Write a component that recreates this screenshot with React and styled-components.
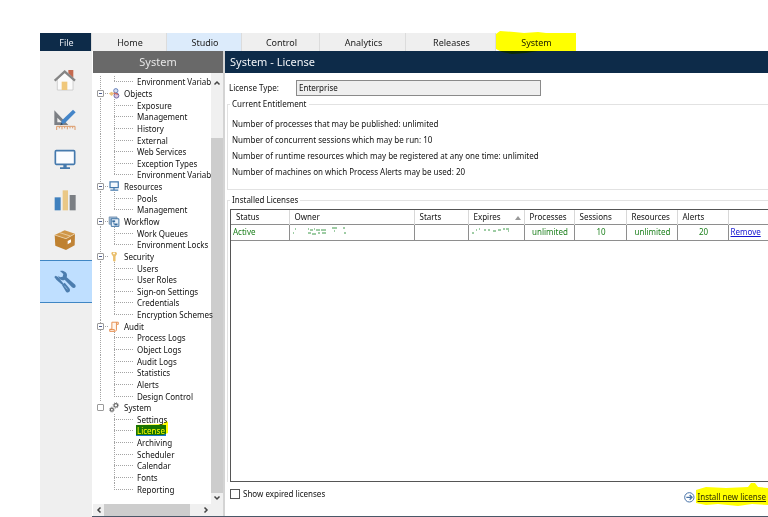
import React, { useState } from 'react'
import styled, { createGlobalStyle } from 'styled-components'

const GlobalStyle = createGlobalStyle`
    * {
        box-sizing: border-box;
    }

    body {
        margin: 0;
        background: #fff;
        color: #111;
        font-family: "Noto Sans", "Open Sans", sans-serif;
        font-size: 8px;
        line-height: 12px;
    }

    button, input {
        font: inherit;
        color: inherit;
    }
`

/* ---------- shell ---------- */

const Page = styled.div`
    display: flex;
    flex-direction: column;
    min-height: 100vh;
    padding: 33px 0 0 40px;
    overflow: hidden;
`

const Body = styled.div`
    display: flex;
    flex: 1;
    min-width: 0;
`

const Workspace = styled.div`
    display: flex;
    flex: 1;
    min-width: 0;
    border-bottom: 1px solid #4a5868;
`

/* ---------- tabs ---------- */

const Tabs = styled.nav`
    display: flex;
    height: 18px;
`

const Tab = styled.button`
    position: relative;
    width: ${(props) => props.$width}px;
    padding: 0 0 0 2px;
    border: 0;
    border-right: 1px solid ${(props) => props.$plain ? 'transparent' : '#dcdcdc'};
    background: ${(props) => props.$bg || '#efefef'};
    color: ${(props) => props.$color || '#222'};
    font-size: 9px;
    line-height: 17px;
`

const Marker = styled.svg`
    position: absolute;
    z-index: 1;
    mix-blend-mode: multiply;
    pointer-events: none;
    left: ${(props) => props.$left}px;
    top: ${(props) => props.$top}px;
`

/* ---------- icon rail ---------- */

const Rail = styled.nav`
    display: flex;
    flex-direction: column;
    width: 52px;
    padding-top: 9px;
    background: #efefef;
`

const RailButton = styled.button`
    display: flex;
    align-items: center;
    justify-content: center;
    height: ${(props) => props.$active ? 43 : 40}px;
    padding: 0 3px 0 0;
    border: 0 solid #3f86c4;
    border-width: ${(props) => props.$active ? '1px 0' : '0'};
    background: ${(props) => props.$active ? '#bfdfff' : 'transparent'};
`

/* ---------- side panel ---------- */

const Side = styled.aside`
    display: flex;
    flex-direction: column;
    width: 133px;
    padding-left: 1px;
    border-right: 2px solid #d4d4d4;
`

const SideTitle = styled.h2`
    margin: 0;
    height: 22px;
    background: #696969;
    color: #e6e6e6;
    font-size: 11px;
    font-weight: 400;
    line-height: 21px;
    text-align: center;
`

const SideScroll = styled.div`
    display: flex;
    flex: 1;
`

const Tree = styled.ul`
    display: grid;
    grid-template-columns: minmax(0, 1fr);
    grid-auto-rows: 1fr;
    flex: 1;
    min-width: 0;
    margin: 0;
    padding: 3px 0 9px;
    list-style: none;
`

const TreeRow = styled.li`
    display: flex;
    align-items: center;
    min-height: 0;
`

const dots = (dir) => `repeating-linear-gradient(${dir}, #a4a4a4 0 1px, transparent 1px 2px)`

const Trunk = styled.span`
    display: flex;
    align-items: center;
    align-self: stretch;
    width: 15px;
    padding-left: 4px;
    background-image: ${(props) => props.$line ? dots('to bottom') : 'none'}${(props) => props.$root ? `, ${dots('to right')}` : ''};
    background-position: 7px 0, 8px 50%;
    background-size: 1px 100%, 8px 1px;
    background-repeat: no-repeat;
`

const Branch = styled.span`
    align-self: stretch;
    width: 28px;
    background-image: ${dots('to bottom')}, ${dots('to right')};
    background-position: 6px 0, 6px 50%;
    background-size: 1px ${(props) => props.$last ? '50%' : '100%'}, 20px 1px;
    background-repeat: no-repeat;
`

const Expander = styled.button`
    display: flex;
    align-items: center;
    justify-content: center;
    width: 7px;
    height: 7px;
    padding: 0;
    border: 1px solid #9a9a9a;
    border-radius: 1px;
    background: #fff;

    &::before {
        content: '';
        width: 3px;
        height: 1px;
        background: ${(props) => props.$bare ? 'transparent' : '#4a5c92'};
    }
`

const TreeIcon = styled.svg`
    flex: none;
    width: 12px;
    height: 11px;
    margin-right: 3px;
`

const TreeLink = styled.a`
    position: relative;
    padding: 0 1px;
    background: ${(props) => props.$selected ? '#1874c8' : 'transparent'};
    color: ${(props) => props.$selected ? '#fff' : '#111'};
    text-decoration: none;
    white-space: nowrap;
`

const TreeText = styled.div`
    flex: 1;
    min-width: 0;
    line-height: 11px;
`

const VBar = styled.div`
    display: flex;
    flex-direction: column;
    align-items: center;
    width: 12px;
    padding: 6px 0 2px;
    background: #f0f0f0;
`

const VThumb = styled.div`
    flex: 1;
    align-self: stretch;
    margin: 51px 0 1px;
    background: #cdcdcd;
`

const HBar = styled.div`
    display: flex;
    align-items: center;
    height: 12px;
    padding-right: 12px;
    background: #f0f0f0;
`

const HThumb = styled.div`
    align-self: stretch;
    width: 86px;
    margin-right: 10px;
    background: #cdcdcd;
`

const Arrow = styled.button`
    display: flex;
    align-items: center;
    justify-content: center;
    width: 11px;
    height: 8px;
    padding: 0;
    border: 0;
    background: transparent;
`

/* ---------- main panel ---------- */

const Main = styled.main`
    display: flex;
    flex: 1;
    flex-direction: column;
    min-width: 0;
`

const MainTitle = styled.h1`
    margin: 0;
    height: 22px;
    padding-left: 5px;
    background: #0d2b49;
    color: #f0f3f6;
    font-size: 11px;
    font-weight: 400;
    line-height: 21px;
`

const TypeRow = styled.div`
    display: flex;
    align-items: center;
    padding: 7px 0 2px 4px;
`

const TypeLabel = styled.label`
    width: 67px;
`

const TypeInput = styled.input`
    width: 245px;
    height: 16px;
    padding: 0 2px 2px;
    border: 1px solid #8a8a8a;
    border-radius: 0;
    background: #efefef;
`

const Group = styled.fieldset`
    display: flex;
    flex: ${(props) => props.$grow ? 1 : 'none'};
    flex-direction: column;
    min-width: 0;
    margin: 0 0 ${(props) => props.$grow ? 0 : 4}px 2px;
    padding: 0 0 ${(props) => props.$grow ? 0 : 9}px 2px;
    border: 1px solid #e2e2e2;
    border-right: 0;
    border-bottom-width: ${(props) => props.$grow ? 0 : 1}px;
`

const Legend = styled.legend`
    margin: 0;
    padding: 0 2px;
`

const Fact = styled.p`
    margin: 0;
    padding-left: 2px;
    line-height: 16px;

    &:first-of-type {
        margin-top: 6px;
    }
`

const TableBox = styled.div`
    flex: 1;
    margin-top: 3px;
    border: 1px solid #555;
    border-width: 1px 0 1px 1px;
    overflow: hidden;
`

const Table = styled.table`
    width: 100%;
    border-collapse: collapse;
    table-layout: fixed;
`

const Th = styled.th`
    height: 14px;
    padding: 0 0 0 5px;
    border: 1px solid #d8d8d8;
    border-width: 0 1px 0 0;
    font-weight: 400;
    text-align: left;
    white-space: nowrap;
`

const Td = styled.td`
    height: 16px;
    padding: 0 0 0 2px;
    border: 1px solid #8e8e8e;
    border-left: 0;
    color: #1d801d;
    text-align: ${(props) => props.$center ? 'center' : 'left'};
    white-space: nowrap;
`

const SortMark = styled.svg`
    float: right;
    margin: 5px 3px 0 0;
`

const Link = styled.a`
    position: relative;
    color: ${(props) => props.$dark ? '#303040' : '#1414d0'};
    text-decoration: underline;
`

const Footer = styled.footer`
    display: flex;
    justify-content: space-between;
    height: 34px;
    padding: 5px 2px 0 5px;
`

const Check = styled.label`
    display: flex;
    align-items: center;
    gap: 3px;
    height: 14px;
`

const CheckBox = styled.input`
    appearance: none;
    width: 10px;
    height: 10px;
    margin: 0;
    border: 1px solid #555;
    background: #fff;

    &:checked {
        background: #0d2b49;
    }
`

const Install = styled.div`
    display: flex;
    align-items: center;
    gap: 2px;
    height: 20px;
`

/* ---------- drawings ---------- */

const HomeIcon = () => (
    <svg width="22" height="22" viewBox="0 0 66 66">
        <path d="M10 30v33h47V30L33 9z" fill="#fbfbfb" stroke="#c0c0c0" strokeWidth="2" />
        <path d="M43 3h15v23l-15-13z" fill="#c4694f" />
        <path d="M23 38h17v25H23z" fill="#f0c87c" />
        <path d="M2 35L32 8l31 27" fill="none" stroke="#858585" strokeWidth="7" />
    </svg>
)

const DesignIcon = () => (
    <svg width="22" height="22" viewBox="0 0 66 66">
        <path d="M1 4v44h42zM10 26l14 14H10z" fill="#7c7f84" fillRule="evenodd" />
        <path d="M57 2l8 8-32 32-14 7 5-15z" fill="#4485c8" />
        <path d="M19 49l3-8 5 5z" fill="#345" />
        <path d="M8 63v-11h55v11M16 53v5M24 53v8M32 53v5M40 53v8M48 53v5M56 53v5" fill="none" stroke="#dd9a68" strokeWidth="3" />
    </svg>
)

const MonitorIcon = () => (
    <svg width="22" height="22" viewBox="0 0 66 66">
        <rect x="4" y="5" width="58" height="41" rx="3" fill="#fafcff" stroke="#4479ad" strokeWidth="5" />
        <path d="M28 47h10v8h10v5H18v-5h10z" fill="#4479ad" />
    </svg>
)

const ChartIcon = () => (
    <svg width="22" height="22" viewBox="0 0 66 66">
        <path d="M2 25h18v39H2z" fill="#3f80bd" />
        <path d="M26 4h16v60H26z" fill="#eac887" />
        <path d="M47 18h18v46H47z" fill="#7b7f84" />
    </svg>
)

const BoxIcon = () => (
    <svg width="22" height="22" viewBox="0 0 66 66">
        <path d="M2 18L32 4l31 10-27 15z" fill="#cf9648" />
        <path d="M2 18l34 11v34L4 50z" fill="#bf8130" />
        <path d="M36 29l27-15-1 35-26 14z" fill="#c08336" />
        <path d="M2 18l34 11 27-15M17 11l32 10" fill="none" stroke="#f3dfbd" strokeWidth="2" />
        <path d="M41 36l10-5v9l-10 6z" fill="#fff" />
    </svg>
)

// spanner above the diagonal, screwdriver below it
const ToolsIcon = () => (
    <svg width="22" height="24" viewBox="0 0 66 72">
        <path d="M18 3l10 9-2 8-8 2-5-5c0 6 4 12 10 13 3 1 6 1 9-1l22 23c3 3 8 3 10 0 2-3 1-7-2-9L38 22c2-5 1-11-3-15-5-5-11-6-17-4z" fill="#4c7dae" />
        <path d="M1 21l4-4 7 4 17 20-4 4L7 29z" fill="#4c7dae" />
        <path d="M24 45l8-7 14 17c6 8-3 17-10 10z" fill="#4c7dae" />
        <path d="M31 47l9 11" stroke="#a5c8ea" strokeWidth="2" />
    </svg>
)

const ObjectsIcon = () => (
    <TreeIcon viewBox="0 0 36 36">
        <path d="M1 18l9-6 9 6-9 8z" fill="#edc27e" />
        <circle cx="24" cy="9" r="7" fill="#d5def2" stroke="#5c77b5" strokeWidth="3" />
        <circle cx="26" cy="25" r="8" fill="#dbc5dd" stroke="#65609f" strokeWidth="3" />
        <path d="M17 16l14 5" stroke="#cc675d" strokeWidth="4" />
    </TreeIcon>
)

const ResourcesIcon = () => (
    <TreeIcon viewBox="0 0 36 36">
        <path d="M5 3h27v19H5zM18 22v6M6 30h26" fill="#f3f8fd" stroke="#4479ad" strokeWidth="4" />
    </TreeIcon>
)

const WorkflowIcon = () => (
    <TreeIcon viewBox="0 0 36 36">
        <path d="M2 3h26v24H2z" fill="#9db9d5" stroke="#607f9e" strokeWidth="2" />
        <path d="M9 9h25v25H9z" fill="#eaf2fa" stroke="#376c9f" strokeWidth="3" />
        <path d="M13 15h8v5h-8zM20 25h9v5h-9zM17 20v7h3" fill="#376c9f" stroke="#376c9f" />
    </TreeIcon>
)

const SecurityIcon = () => (
    <TreeIcon viewBox="0 0 36 36">
        <path d="M11 3h14l3 6-5 9v15l-4 2-4-3V18l-6-9z" fill="#eabf6d" />
        <circle cx="18" cy="8" r="3" fill="#fff" />
    </TreeIcon>
)

const AuditIcon = () => (
    <TreeIcon viewBox="0 0 36 36">
        <path d="M11 4h21v7h-6v18c0 3-3 5-6 5H4v-7h7z" fill="#fff6ee" stroke="#e58a48" strokeWidth="3" />
        <path d="M26 11V4M4 28h15v6" fill="none" stroke="#e58a48" strokeWidth="3" />
    </TreeIcon>
)

const SystemIcon = () => (
    <TreeIcon viewBox="0 0 36 36">
        <circle cx="24" cy="11" r="6" fill="none" stroke="#666" strokeWidth="4" />
        <circle cx="24" cy="11" r="9" fill="none" stroke="#777" strokeWidth="3" strokeDasharray="3 4" />
        <circle cx="11" cy="25" r="5" fill="none" stroke="#666" strokeWidth="4" />
        <circle cx="11" cy="25" r="8" fill="none" stroke="#777" strokeWidth="3" strokeDasharray="3 4" />
    </TreeIcon>
)

const Chevron = ({ turn }) => (
    <svg width="8" height="8" viewBox="0 0 16 16">
        <path d="M3 11l5-5 5 5" fill="none" stroke="#444" strokeWidth="3" transform={ `rotate(${turn} 8 8)` } />
    </svg>
)

// what is left of the wiped owner and expiry values
const WipedOwner = () => (
    <svg width="56" height="10" viewBox="0 0 56 10" fill="none" stroke="#3f9a4a">
        <path d="M1 7h1M3 3h1M16 3h1M18 4h3M22 3h1M24 4h4M29 4h5M16 7h3M20 8h4M26 7h2M30 7h4M40 2h5M51 2h2M42 5h1M52 7h2" />
    </svg>
)

const WipedDate = () => (
    <svg width="42" height="10" viewBox="0 0 42 10" fill="none" stroke="#3f9a4a">
        <path d="M1 7h2M5 4h1M8 3h1M13 4h2M17 4h2M22 5h3M27 4h3M32 3h2M35 3h3M37 5h1" />
    </svg>
)

/* ---------- data ---------- */

const TABS = [
    { name: 'File', width: 52, bg: '#0d2b49', color: '#e4e9ef' },
    { name: 'Home', width: 75 },
    { name: 'Studio', width: 75, bg: '#dcebfb' },
    { name: 'Control', width: 78 },
    { name: 'Analytics', width: 86 },
    { name: 'Releases', width: 90 },
    { name: 'System', width: 80, bg: '#fff' },
]

const RAIL = [
    { name: 'Home', Icon: HomeIcon },
    { name: 'Studio', Icon: DesignIcon },
    { name: 'Control', Icon: MonitorIcon },
    { name: 'Analytics', Icon: ChartIcon },
    { name: 'Releases', Icon: BoxIcon },
    { name: 'System', Icon: ToolsIcon, active: true },
]

const TREE = [
    { items: ['Environment Variab'] },
    { name: 'Objects', Icon: ObjectsIcon, items: ['Exposure', 'Management', 'History', 'External', 'Web Services', 'Exception Types', 'Environment Variab'] },
    { name: 'Resources', Icon: ResourcesIcon, items: ['Pools', 'Management'] },
    { name: 'Workflow', Icon: WorkflowIcon, items: ['Work Queues', 'Environment Locks'] },
    { name: 'Security', Icon: SecurityIcon, items: ['Users', 'User Roles', 'Sign-on Settings', 'Credentials', 'Encryption Schemes'] },
    { name: 'Audit', Icon: AuditIcon, items: ['Process Logs', 'Object Logs', 'Audit Logs', 'Statistics', 'Alerts', 'Design Control'] },
    { name: 'System', Icon: SystemIcon, items: ['Settings', 'License', 'Archiving', 'Scheduler', 'Calendar', 'Fonts', 'Reporting'] },
]

const FACTS = [
    'Number of processes that may be published: unlimited',
    'Number of concurrent sessions which may be run: 10',
    'Number of runtime resources which may be registered at any one time: unlimited',
    'Number of machines on which Process Alerts may be used: 20',
]

const COLUMNS = [
    { name: 'Status', width: 58 },
    { name: 'Owner', width: 125 },
    { name: 'Starts', width: 54 },
    { name: 'Expires', width: 56, sorted: true },
    { name: 'Processes', width: 50 },
    { name: 'Sessions', width: 52 },
    { name: 'Resources', width: 51 },
    { name: 'Alerts', width: 51 },
    { name: '', width: 41 },
]

/* ---------- parts ---------- */

function SideTree () {
    return (
        <Tree>
            { TREE.map(({ name, Icon, items }, i) => {
                const lastGroup = i === TREE.length - 1

                return (
                    <React.Fragment key={ i }>
                        { name && (
                            <TreeRow>
                                <Trunk $line={ !lastGroup } $root={ !lastGroup }>
                                    <Expander $bare={ lastGroup } aria-label={ `Collapse ${name}` } />
                                </Trunk>
                                <Icon />
                                <TreeText>
                                    <TreeLink href="#">{ name }</TreeLink>
                                </TreeText>
                            </TreeRow>
                        ) }
                        { items.map((item, j) => (
                            <TreeRow key={ j }>
                                <Trunk $line={ !lastGroup } />
                                <Branch $last={ j === items.length - 1 } />
                                <TreeText>
                                    <TreeLink href="#" $selected={ item === 'License' }>
                                        { item }
                                        { item === 'License' && (
                                            <Marker $left={ 0 } $top={ -4 } width="33" height="17" viewBox="0 0 33 17">
                                                <path d="M0 4l27-1 3-3 2 1v11l-5 2H0z" fill="#ff0" />
                                            </Marker>
                                        ) }
                                    </TreeLink>
                                </TreeText>
                            </TreeRow>
                        )) }
                    </React.Fragment>
                )
            }) }
        </Tree>
    )
}

function LicenseTable () {
    return (
        <TableBox>
            <Table>
                <colgroup>
                    { COLUMNS.map((col) => <col key={ col.name } width={ col.width } />) }
                </colgroup>
                <thead>
                    <tr>
                        { COLUMNS.map((col) => (
                            <Th key={ col.name }>
                                { col.sorted && (
                                    <SortMark width="6" height="4" viewBox="0 0 6 4">
                                        <path d="M0 4l3-4 3 4z" fill="#999" />
                                    </SortMark>
                                ) }
                                { col.name }
                            </Th>
                        )) }
                    </tr>
                </thead>
                <tbody>
                    <tr>
                        <Td>Active</Td>
                        <Td><WipedOwner /></Td>
                        <Td />
                        <Td><WipedDate /></Td>
                        <Td $center>unlimited</Td>
                        <Td $center>10</Td>
                        <Td $center>unlimited</Td>
                        <Td $center>20</Td>
                        <Td><Link href="#">Remove</Link></Td>
                    </tr>
                </tbody>
            </Table>
        </TableBox>
    )
}

function App () {
    const [showExpired, setShowExpired] = useState(false)

    return (
        <Page>
            <GlobalStyle />
            <Tabs>
                { TABS.map((tab) => (
                    <Tab key={ tab.name } $width={ tab.width } $bg={ tab.bg } $color={ tab.color } $plain={ tab.name === 'System' }>
                        { tab.name }
                        { tab.name === 'System' && (
                            <Marker $left={ 0 } $top={ -2 } width="80" height="23" viewBox="0 0 80 23">
                                <path d="M0 3l4-3 14 1 10 1 14-1 8 1h30v18H42l-12 2-14 1-10-2-6-3z" fill="#ff0" />
                            </Marker>
                        ) }
                    </Tab>
                )) }
            </Tabs>
            <Body>
                <Rail>
                    { RAIL.map(({ name, Icon, active }) => (
                        <RailButton key={ name } $active={ active } aria-label={ name }>
                            <Icon />
                        </RailButton>
                    )) }
                </Rail>
                <Workspace>
                    <Side>
                        <SideTitle>System</SideTitle>
                        <SideScroll>
                            <SideTree />
                            <VBar>
                                <Arrow aria-label="Scroll up"><Chevron turn={ 0 } /></Arrow>
                                <VThumb />
                                <Arrow aria-label="Scroll down"><Chevron turn={ 180 } /></Arrow>
                            </VBar>
                        </SideScroll>
                        <HBar>
                            <Arrow aria-label="Scroll left"><Chevron turn={ -90 } /></Arrow>
                            <HThumb />
                            <Arrow aria-label="Scroll right"><Chevron turn={ 90 } /></Arrow>
                        </HBar>
                    </Side>
                    <Main>
                        <MainTitle>System - License</MainTitle>
                        <TypeRow>
                            <TypeLabel htmlFor="license-type">License Type:</TypeLabel>
                            <TypeInput id="license-type" value="Enterprise" readOnly />
                        </TypeRow>
                        <Group>
                            <Legend>Current Entitlement</Legend>
                            { FACTS.map((fact) => <Fact key={ fact }>{ fact }</Fact>) }
                        </Group>
                        <Group $grow>
                            <Legend>Installed Licenses</Legend>
                            <LicenseTable />
                        </Group>
                        <Footer>
                            <Check>
                                <CheckBox
                                    type="checkbox"
                                    checked={ showExpired }
                                    onChange={ (e) => setShowExpired(e.target.checked) }
                                />
                                Show expired licenses
                            </Check>
                            <Install>
                                <svg width="11" height="11" viewBox="0 0 33 33" fill="none" stroke="#4773a8" strokeWidth="3">
                                    <circle cx="16" cy="16" r="14" />
                                    <path d="M7 16h17M17 9l7 7-7 7" strokeWidth="4" />
                                </svg>
                                <Link href="#" $dark>
                                    Install new license
                                    <Marker $left={ -1 } $top={ -9 } width="72" height="26" viewBox="0 0 72 26">
                                        <path d="M0 8l10-3 20 1 22-1 3-4 4 0 3 4 10 1v17l-16-1-14 2-20-2-12 1-10-2z" fill="#ff0" />
                                    </Marker>
                                </Link>
                            </Install>
                        </Footer>
                    </Main>
                </Workspace>
            </Body>
        </Page>
    )
}

export default App
